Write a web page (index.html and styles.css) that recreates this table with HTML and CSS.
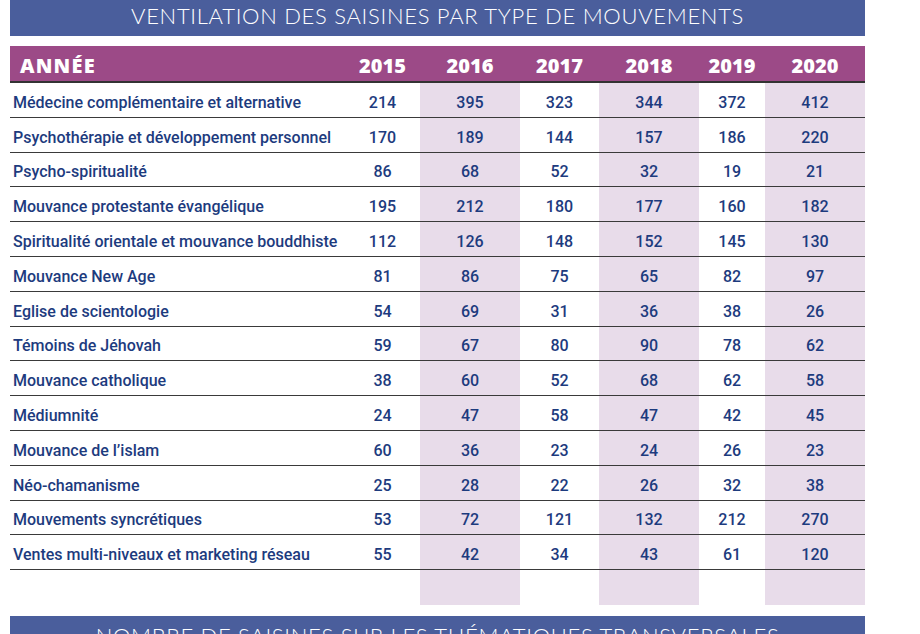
FILE: index.html
```html
<!DOCTYPE html>
<html lang="fr">
<head>
<meta charset="utf-8">
<title>Ventilation des saisines</title>
<link rel="stylesheet" href="styles.css">
</head>
<body>
<div class="page">
  <div class="banner">VENTILATION DES SAISINES PAR TYPE DE MOUVEMENTS</div>
  <div class="table">
    <div class="row head">
      <div class="label">ANNÉE</div>
      <div class="num">2015</div>
      <div class="num">2016</div>
      <div class="num">2017</div>
      <div class="num">2018</div>
      <div class="num">2019</div>
      <div class="num">2020</div>
    </div>
    <div class="row"><div class="label">Médecine complémentaire et alternative</div><div class="num">214</div><div class="num sh">395</div><div class="num">323</div><div class="num sh">344</div><div class="num">372</div><div class="num sh">412</div></div>
    <div class="row"><div class="label">Psychothérapie et développement personnel</div><div class="num">170</div><div class="num sh">189</div><div class="num">144</div><div class="num sh">157</div><div class="num">186</div><div class="num sh">220</div></div>
    <div class="row"><div class="label">Psycho-spiritualité</div><div class="num">86</div><div class="num sh">68</div><div class="num">52</div><div class="num sh">32</div><div class="num">19</div><div class="num sh">21</div></div>
    <div class="row"><div class="label">Mouvance protestante évangélique</div><div class="num">195</div><div class="num sh">212</div><div class="num">180</div><div class="num sh">177</div><div class="num">160</div><div class="num sh">182</div></div>
    <div class="row"><div class="label">Spiritualité orientale et mouvance bouddhiste</div><div class="num">112</div><div class="num sh">126</div><div class="num">148</div><div class="num sh">152</div><div class="num">145</div><div class="num sh">130</div></div>
    <div class="row"><div class="label">Mouvance New Age</div><div class="num">81</div><div class="num sh">86</div><div class="num">75</div><div class="num sh">65</div><div class="num">82</div><div class="num sh">97</div></div>
    <div class="row"><div class="label">Eglise de scientologie</div><div class="num">54</div><div class="num sh">69</div><div class="num">31</div><div class="num sh">36</div><div class="num">38</div><div class="num sh">26</div></div>
    <div class="row"><div class="label">Témoins de Jéhovah</div><div class="num">59</div><div class="num sh">67</div><div class="num">80</div><div class="num sh">90</div><div class="num">78</div><div class="num sh">62</div></div>
    <div class="row"><div class="label">Mouvance catholique</div><div class="num">38</div><div class="num sh">60</div><div class="num">52</div><div class="num sh">68</div><div class="num">62</div><div class="num sh">58</div></div>
    <div class="row"><div class="label">Médiumnité</div><div class="num">24</div><div class="num sh">47</div><div class="num">58</div><div class="num sh">47</div><div class="num">42</div><div class="num sh">45</div></div>
    <div class="row"><div class="label">Mouvance de l’islam</div><div class="num">60</div><div class="num sh">36</div><div class="num">23</div><div class="num sh">24</div><div class="num">26</div><div class="num sh">23</div></div>
    <div class="row"><div class="label">Néo-chamanisme</div><div class="num">25</div><div class="num sh">28</div><div class="num">22</div><div class="num sh">26</div><div class="num">32</div><div class="num sh">38</div></div>
    <div class="row"><div class="label">Mouvements syncrétiques</div><div class="num">53</div><div class="num sh">72</div><div class="num">121</div><div class="num sh">132</div><div class="num">212</div><div class="num sh">270</div></div>
    <div class="row"><div class="label">Ventes multi-niveaux et marketing réseau</div><div class="num">55</div><div class="num sh">42</div><div class="num">34</div><div class="num sh">43</div><div class="num">61</div><div class="num sh">120</div></div>
    <div class="row spacer"><div></div><div></div><div class="sh"></div><div></div><div class="sh"></div><div></div><div class="sh"></div></div>
  </div>
  <div class="banner next">NOMBRE DE SAISINES SUR LES THÉMATIQUES TRANSVERSALES</div>
</div>
</body>
</html>
```
FILE: styles.css
```css
html, body {
  margin: 0;
  padding: 0;
  background: #ffffff;
}
body {
  width: 920px;
  height: 634px;
  overflow: hidden;
}
.page {
  margin-left: 10px;
  width: 855px;
}
.banner {
  height: 36px;
  background: #4a5e9c;
  color: #ffffff;
  font-family: Lato, "Open Sans", sans-serif;
  font-weight: 300;
  font-size: 22px;
  line-height: 32px;
  text-align: center;
  letter-spacing: 0.7px;
}
.banner.next {
  margin-top: 11px;
  line-height: 40px;
}
.table {
  margin-top: 10px;
  display: flex;
  flex-direction: column;
}
.row {
  display: grid;
  grid-template-columns: 335px 75px 100px 79px 100px 66px 100px;
  height: 34.8px;
  box-sizing: border-box;
  border-bottom: 1.5px solid #3a3a3a;
  font-family: Roboto, "Noto Sans", sans-serif;
  font-weight: 500;
  font-size: 16px;
  color: #1d3b7e;
}
.row > div {
  display: flex;
  align-items: center;
  padding-top: 5px;
}
.label {
  padding-left: 3px;
}
.num {
  justify-content: center;
}
.sh {
  background: #e8dcea;
}
.row.head {
  height: 37px;
  background: #9c4a87;
  color: #ffffff;
  font-family: "Open Sans", sans-serif;
  font-weight: 800;
  font-size: 20px;
  border-bottom: 2px solid #333333;
}
.row.head > div {
  padding-top: 4px;
}
.row.head .label {
  padding-left: 10px;
  letter-spacing: 1.2px;
}
.row.spacer {
  height: 35px;
  border-bottom: none;
}
```
